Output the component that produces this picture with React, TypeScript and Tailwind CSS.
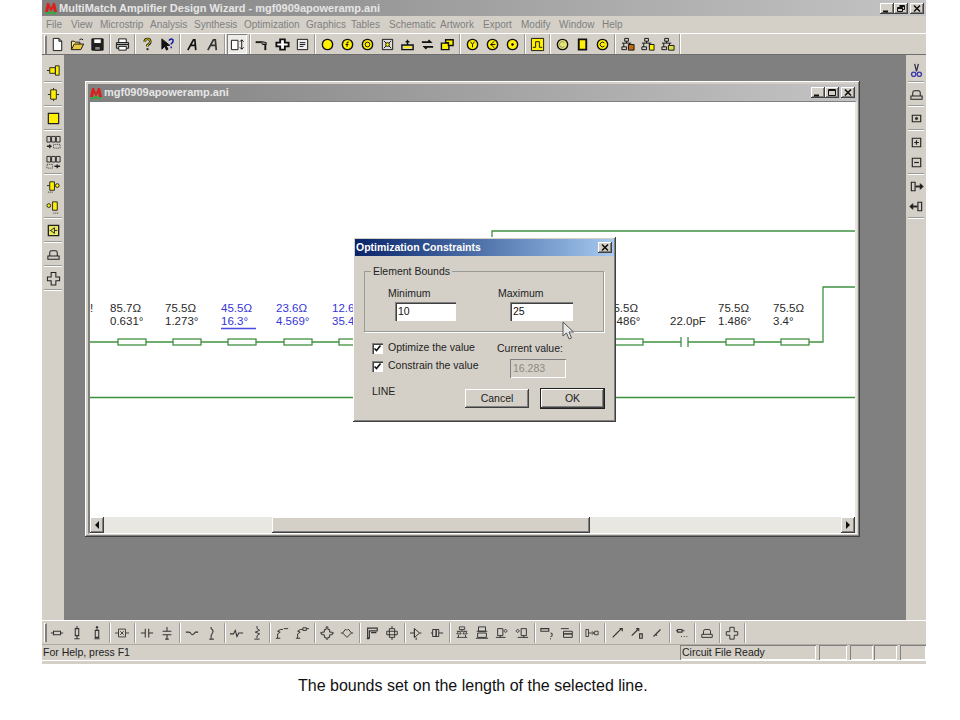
import type { ReactNode } from "react";

const raised = "shadow-[inset_-1px_-1px_0_#404040,inset_1px_1px_0_#ffffff,inset_-2px_-2px_0_#808080]";
const sunken = "shadow-[inset_1px_1px_0_#808080,inset_2px_2px_0_#404040,inset_-1px_-1px_0_#ffffff]";
const thin = "shadow-[inset_1px_1px_0_#808080,inset_-1px_-1px_0_#ffffff]";

function Ico({ children, size = 16, color = "#111" }: { children: ReactNode; size?: number; color?: string }) {
  return (
    <svg width={size} height={size} viewBox="0 0 16 16" fill="none" stroke={color} strokeWidth="1">
      {children}
    </svg>
  );
}

const Y = ({ children }: { children?: ReactNode }) => (
  <>
    <circle cx="8" cy="8" r="5.5" fill="#ffef00" strokeWidth="1.5" />
    {children}
  </>
);

const Logo = ({ size }: { size: number }) => (
  <svg width={size} height={size} viewBox="0 0 14 14" className="shrink-0">
    <path d="M1 11 3 2h2l2 5 2-5h2l2 9h-3L9 7l-2 4-2-4-1 4z" fill="#d8201c" />
    <path d="M2 12.5q5-2 10 0" stroke="#2fae3c" strokeWidth="2" fill="none" />
  </svg>
);

const topGroups: ReactNode[][] = [
  [
    <path d="M3.5 1.5h6l3 3v10h-9zM9.5 1.5v3h3" fill="#fff" />,
    <><path d="M1.5 13.5v-9h3l1 1h5v2" fill="#ffe680" /><path d="M1.5 13.5l3-6h10l-3 6z" fill="#e8c840" /><path d="M10 3q2-2 4 0" /></>,
    <><path d="M2 2h12v12H2z" fill="#222" /><path d="M4 2h8v5H4z" fill="#fff" /><path d="M5 10h6v4H5z" fill="#888" /></>,
  ],
  [<><path d="M4 2h8v4H4z" fill="#fff" /><path d="M1.5 6h13v6h-13z" fill="#bbb" /><path d="M4 10h8v4H4z" fill="#fff" /><path d="M2 8h12" /></>],
  [
    <><path d="M5 5q0-3 3-3t3 3q0 2-3 3.5V10" stroke="#111" strokeWidth="2.6" /><path d="M5 5q0-3 3-3t3 3q0 2-3 3.5V10" stroke="#ffef00" /><path d="M8 12v2" strokeWidth="2" /></>,
    <><path d="M2 2v11l3-3 2 4 1.5-1-2-4h4z" fill="#111" /><path d="M10 4q0-2 2-2t2 2-2 3v1M12 10v2" stroke="#1018a8" strokeWidth="1.6" /></>,
  ],
  [
    <path d="M3 14 9 3h1.500l1 11M6 9h6" strokeWidth="1.8" />,
    <path d="M3 14 9 3h2l1 11M6 9h6" strokeWidth="1.8" stroke="#333" />,
  ],
  [<><path d="M1.5 3.5h7v10h-7z" fill="#fff" /><path d="M12.5 3v10M10.5 5l2-2 2 2M10.5 11l2 2 2-2" /></>],
  [
    <><path d="M1 5h7l4 1v2H8L7 6H1z" fill="#888" /><path d="M11 8v6" strokeWidth="2" /></>,
    <path d="M5.5 2.5h5v3.5h4v4h-4v3.5h-5V10h-4V6h4z" fill="#fff" strokeWidth="2" />,
    <><path d="M2.5 2.5h11v11h-11z" fill="#eee" /><path d="M5 6h6M5 8h6M5 10h4" /></>,
  ],
  [
    <Y />,
    <Y><path d="M9.5 5.5q-2-1-2 1v4M6 8h3" /></Y>,
    <Y><circle cx="8" cy="8" r="2.5" /></Y>,
    <><path d="M2.5 2.5h11v11h-11z" fill="#ddd" /><path d="M4 4l8 8M12 4l-8 8" /><circle cx="8" cy="8" r="2" fill="#ffef00" /></>,
    <><path d="M2 8.5h12v5H2zM8 8V3M6 5h4" strokeWidth="1.5" /><path d="M4 10h8v2H4z" fill="#ffef00" stroke="none" /></>,
    <path d="M2 5.5h9l-2-2M14 10.5H5l2 2" strokeWidth="2" />,
    <><path d="M1.5 6.5h8v7h-8z" fill="#ffef00" strokeWidth="1.5" /><path d="M6 3h8v6H9V6H6z" fill="#ffef00" strokeWidth="1.5" /></>,
  ],
  [
    <Y><path d="M6 5l2 3 2-3M8 8v3" /></Y>,
    <Y><path d="M10 4.5 6 8l4 3.5M6 8h5" /></Y>,
    <Y><circle cx="8" cy="8" r="1" fill="#111" /></Y>,
  ],
  [<><path d="M1.5 1.5h13v13h-13z" fill="#ffef00" /><path d="M3 11h3V5h4v6h3" /></>],
  [
    <><circle cx="8" cy="8" r="5.5" fill="#e8e870" strokeWidth="1.5" /><path d="M10 6a3 3 0 1 0 0 4" stroke="#888" /></>,
    <path d="M4 2.5h8v11H4z" fill="#ffef00" strokeWidth="2" />,
    <><circle cx="8" cy="8" r="5.500" fill="#ffef00" strokeWidth="1.5" /><path d="M10 6.5a2.5 2.5 0 1 0 0 3" /></>,
  ],
  [
    <><path d="M5 1.5h4v3H5zM2 6.5h10M4 6.5v4M10 6.5v4M7 4.5v2M2 10.5h5v3H2z" /><path d="M9 8h6v6H9z" fill="#c06a10" /></>,
    <><path d="M5 1.5h4v3H5zM2 6.5h10M4 6.5v4M10 6.5v4M7 4.5v2M2 10.5h5v3H2z" /><path d="M10 8h5v6h-5z" fill="#ffef00" /></>,
    <><path d="M5 1.5h4v3H5zM2 6.5h10M4 6.5v4M10 6.5v4M7 4.5v2M2 10.5h5v3H2z" /><path d="M9 9h6v5H9z" fill="#e0e040" /></>,
  ],
];

const bottomGroups: ReactNode[][] = [
  [
    <path d="M1 8h3M12 8h3M4 6h8v4H4z" strokeWidth="1.2" />,
    <path d="M8 0v3M8 11v3M6 3h4v8H6zM5 14.5h6" strokeWidth="1.2" />,
    <><path d="M8 3v2M6 5h4v8H6zM5 14.5h6" strokeWidth="1.2" /><circle cx="8" cy="1.5" r="1" fill="#111" /></>,
  ],
  [<path d="M0 8h4M12 8h4M4 3.5h8v9H4zM6 6l4 4M10 6l-4 4" />],
  [
    <path d="M1 8h5M6 3v10M10 3v10M10 8h5" strokeWidth="1.2" />,
    <path d="M8 1v5M3 6h10M3 10h10M8 10v5M6 15h4" strokeWidth="1.2" />,
  ],
  [
    <path d="M1 7h3q2 0 3 2t3 0 2-2h3" strokeWidth="1.2" />,
    <path d="M7 1v2q3 2 2 4T7 11v3M5 15h5" strokeWidth="1.2" />,
  ],
  [
    <path d="M0 9h4l2-4 2 7 2-4h5" strokeWidth="1.2" />,
    <path d="M8 0v3l3 2-5 2 5 2-3 2v3M5 15h6" strokeWidth="1.1" />,
  ],
  [
    <path d="M1 14h5M3 14V9l3-2-3-1 3-2h3M10 3h5" strokeWidth="1.1" />,
    <path d="M1 14h5M3 14V9l3-2-3-1 3-2h3M9 2h4v3H9zM13 3h3" strokeWidth="1.1" />,
  ],
  [
    <path d="M5 4h2V1h2v3h2v3h3v3h-3v3H9v2H7v-2H5v-3H2V7h3zM0 8h2M14 8h2" strokeWidth="1.1" />,
    <path d="M1 8h2l3-4h1l1 1 1-1h1l3 4h2M3 8l5 5 5-5" strokeWidth="1.1" />,
  ],
  [
    <path d="M3 2.5h11v3H5v8H3zM7 7.5h6M2 14.5h3" strokeWidth="1.3" />,
    <path d="M5 3h6v10H5zM2 6h12v4H2zM8 0v3M8 13v3" strokeWidth="1.1" />,
  ],
  [
    <path d="M0 8h5M5 3l6 5-6 5zM11 8h2M5 3v10M7 13v3" strokeWidth="1.1" />,
    <path d="M1 8h2M3 4h4v8H3zM7 4h3v8H7zM10 8h5" strokeWidth="1.1" />,
  ],
  [
    <path d="M5 1h6v3H5zM8 4v2M2 6h12M4 6l-2 3h5L5 6M11 6l-2 3h5l-2-3M2 13h12M4 10v3M12 10v3" strokeWidth="1" />,
    <path d="M4 1h8v5H4zM2 6h12M3 8h10v5H3zM1 14h14" strokeWidth="1.1" />,
    <path d="M3 3h6v8H3zM1 13h11M6 11v2M12 4a1.6 1.6 0 1 0 .1 0" strokeWidth="1.1" />,
    <path d="M7 3h6v8H7zM3 13h12M10 11v2M3 4a1.6 1.6 0 1 0 .1 0" strokeWidth="1.1" />,
  ],
  [
    <path d="M1 3h9v3H1zM12 8q2 0 2 2t-2 2M12 14v1" strokeWidth="1.2" />,
    <path d="M1 3h9M4 6h10v3H4zM4 9h10v4H4z" strokeWidth="1.1" />,
  ],
  [<path d="M1 4h3v8H1zM4 8h6l-2-2M10 8l-2 2M11 6h4v4h-4z" strokeWidth="1" />],
  [
    <path d="M3 13l10-10M6 10l3-3M11 3h3v3" strokeWidth="1.4" />,
    <path d="M2 11l7-7M7 3h3v3M11 9h3v5h-3z" strokeWidth="1.3" />,
    <path d="M4 12l8-8M6 9l2 2" strokeWidth="1.3" />,
  ],
  [<><path d="M3 4h5v3H3zM1 5.5h2M8 5.5h3M10 12h1M13 12h1M7 12h1" strokeWidth="1.2" /></>],
  [<path d="M2 9.5h12v3.5H2zM4 9.5V6q0-2 2-2h4q2 0 2 2v3.500" strokeWidth="1.1" />],
  [<path d="M5.5 1.500h5v5h4v4h-4v4.500h-5v-4.500h-4v-4h4z" strokeWidth="1.1" />],
];

const leftGroups: ReactNode[][] = [
  [<><path d="M1 8h3M4 5h6v6H4zM10 3h4v10h-4z" fill="#ffef00" /></>],
  [<><path d="M8 1v2M8 13v2M2 8h3M11 8h3" /><path d="M5 3h6v10H5z" fill="#ffef00" /></>],
  [<path d="M2.500 2.500h11v11h-11z" fill="#ffef00" strokeWidth="1.3" />],
  [
    <><path d="M1 1.500h4v6H1zM6 1.500h4v6H6zM11 1.500h4v6h-4zM5 4.500h1M10 4.500h1" /><path d="M1 12h5M4 10v4" strokeWidth="1.5" /><path d="M8 10h7v4H8z" stroke="#333" strokeDasharray="1 1" /></>,
    <><path d="M1 1.500h4v6H1zM6 1.500h4v6H6zM11 1.500h4v6h-4zM5 4.500h1M10 4.500h1" /><path d="M9 12h6M12 10v4" strokeWidth="1.5" /><path d="M1 10h6v4H1z" stroke="#333" strokeDasharray="1 1" /></>,
  ],
  [
    <><path d="M1 7h3M4 3h5v9H4z" fill="#ffef00" /><circle cx="12" cy="7" r="2" fill="#ffef00" /><path d="M2 14h5" strokeDasharray="1 1" /></>,
    <><path d="M7 3h5v9H7z" fill="#ffef00" /><circle cx="3" cy="7" r="2" fill="#ffef00" /><path d="M8 15h6" strokeDasharray="1 1" /></>,
  ],
  [<><path d="M2.500 2.500h11v11h-11z" fill="#e8e860" strokeWidth="1.4" /><path d="M5 8l4-3v6zM9 8h3M5 8H4" /></>],
  [<path d="M2 9.500h12v3.500H2zM4 9.500V6q0-2 2-2h4q2 0 2 2v3.500" strokeWidth="1.1" />],
  [<path d="M5.500 1.500h5v5h4v4h-4v4.500h-5v-4.500h-4v-4h4z" strokeWidth="1.1" />],
];

const rightGroups: ReactNode[][] = [
  [<><path d="M6 1l2 8M10 1 8 9" stroke="#334" strokeWidth="1.4" /><circle cx="5" cy="12" r="2.300" stroke="#3a3aa8" strokeWidth="1.4" /><circle cx="11" cy="12" r="2.300" stroke="#3a3aa8" strokeWidth="1.4" /></>],
  [<path d="M2 9.500h12v3.500H2zM4 9.500V6q0-2 2-2h4q2 0 2 2v3.500" strokeWidth="1.1" />],
  [<><path d="M3.500 4.500h9v7h-9z" strokeWidth="1.2" /><circle cx="8" cy="8" r="1.200" fill="#333" /></>],
  [
    <><path d="M3.500 3.500h9v9h-9z" strokeWidth="1.2" /><path d="M5.500 8h5M8 5.500v5" strokeWidth="1.3" /></>,
    <><path d="M3.500 3.500h9v9h-9z" strokeWidth="1.2" /><path d="M5.500 8h5" strokeWidth="1.3" /></>,
  ],
  [
    <><path d="M2.500 3.500h4v9h-4z" strokeWidth="1.2" /><path d="M7 8h6" strokeWidth="2" /><path d="M12 5l3 3-3 3z" fill="#111" /></>,
    <><path d="M9.500 3.500h4v9h-4z" strokeWidth="1.2" /><path d="M3 8h6" strokeWidth="2" /><path d="M4 5 1 8l3 3z" fill="#111" /></>,
  ],
];

function Gripper() {
  return <div className="w-[3px] h-[19px] ml-[2px] border-l border-t border-white border-r-2 border-r-[#808080]" />;
}

function HToolbar({ groups, pressed, size, color }: { groups: ReactNode[][]; pressed?: number; size?: number; color?: string }) {
  return (
    <>
      {groups.map((g, i) => (
        <div key={i} className="flex items-center">
          {g.map((icon, j) => (
            <div
              key={j}
              className={`w-[20px] h-[20px] flex items-center justify-center ${pressed === i ? thin + " bg-[#eeece6]" : ""}`}
            >
              <Ico size={size} color={color}>{icon}</Ico>
            </div>
          ))}
          <div className="w-[5px] h-[20px] flex justify-center">
            <div className="w-[2px] h-full border-l border-[#9a9a9a] border-r border-r-white" />
          </div>
        </div>
      ))}
    </>
  );
}

function VToolbar({ groups, side }: { groups: ReactNode[][]; side: string }) {
  return (
    <div className={`bg-[#d4d0c8] pt-[5px] flex flex-col items-center shrink-0 ${side}`}>
      {groups.map((g, i) => (
        <div key={i} className="flex flex-col items-center w-full">
          {g.map((icon, j) => (
            <div key={j} className="h-[20px] flex items-center justify-center">
              <Ico size={15} color="#222">{icon}</Ico>
            </div>
          ))}
          <div className="h-[4px] w-full flex items-center px-[2px]">
            <div className="h-[2px] w-full border-t border-[#9a9a9a] border-b border-b-white" />
          </div>
        </div>
      ))}
    </div>
  );
}

function WinBtn({ kind, className = "" }: { kind: "min" | "max" | "restore" | "close"; className?: string }) {
  return (
    <div className={`w-[14px] h-[11px] bg-[#d4d0c8] flex items-center justify-center ${raised} ${className}`}>
      <svg width="10" height="9" viewBox="0 0 10 9" fill="none" stroke="#111">
        {kind === "min" && <path d="M1 7.500h5" strokeWidth="2" />}
        {kind === "max" && <path d="M1.500 1.500h7v6h-7zM1.500 2.500h7" />}
        {kind === "restore" && <path d="M3.500 1.500h5v4h-2M1.500 3.500h5v4h-5zM3.500 2.500h5M1.500 4.500h5" />}
        {kind === "close" && <path d="M2 1.500l6 6M8 1.500l-6 6" strokeWidth="1.600" />}
      </svg>
    </div>
  );
}

const menus = [
  ["File", "w-[25px]"],
  ["View", "w-[29px]"],
  ["Microstrip", "w-[50px]"],
  ["Analysis", "w-[44px]"],
  ["Synthesis", "w-[50px]"],
  ["Optimization", "w-[62px]"],
  ["Graphics", "w-[45px]"],
  ["Tables", "w-[38px]"],
  ["Schematic", "w-[51px]"],
  ["Artwork", "w-[43px]"],
  ["Export", "w-[38px]"],
  ["Modify", "w-[38px]"],
  ["Window", "w-[43px]"],
  ["Help", "w-[30px]"],
];

const labels = [
  { pos: "left-[0px]", a: "!", b: "" },
  { pos: "left-[20px]", a: "85.7Ω", b: "0.631°" },
  { pos: "left-[75px]", a: "75.5Ω", b: "1.273°" },
  { pos: "left-[131px]", a: "45.5Ω", b: "16.3°", blue: true },
  { pos: "left-[186px]", a: "23.6Ω", b: "4.569°", blue: true },
  { pos: "left-[242px]", a: "12.6Ω", b: "35.4°", blue: true },
  { pos: "left-[517px]", a: "75.5Ω", b: "1.486°" },
  { pos: "left-[580px]", a: "\u00a0", b: "22.0pF" },
  { pos: "left-[628px]", a: "75.5Ω", b: "1.486°" },
  { pos: "left-[683px]", a: "75.5Ω", b: "3.4°" },
];

function Circuit() {
  const rects = [118, 173, 228, 284, 339, 615, 726, 781];
  return (
    <svg className="absolute inset-0" width="765" height="416" viewBox="90 102 765 416" fill="none" stroke="#3f9142" strokeWidth="1.300">
      <path d="M90 342H400M600 342H681M688 342H823V287H855M492 240V231H855M90 397.500H855" />
      <path d="M681 337V347M688 337V347" />
      {rects.map((x) => (
        <rect key={x} x={x} y="339" width="28" height="6" fill="#fff" />
      ))}
      <path d="M221 328.500H256" stroke="#4a4ae0" strokeWidth="1.300" />
    </svg>
  );
}

function ChildWindow() {
  return (
    <div className={`absolute left-[21px] top-[26px] w-[775px] h-[456px] bg-[#d4d0c8] p-[3px] flex flex-col ${raised}`}>
      <div className="h-[17px] shrink-0 flex items-center pl-[1px] pr-[1px] bg-gradient-to-r from-[#808080] to-[#c4c4c4]">
        <Logo size={14} />
        <span className="ml-[1px] text-[11px] font-bold text-[#e6e6e6] font-['Liberation_Sans',sans-serif]">mgf0909apoweramp.ani</span>
        <div className="ml-auto flex mr-[1px]">
          <WinBtn kind="min" />
          <WinBtn kind="max" />
          <WinBtn kind="close" className="ml-[2px]" />
        </div>
      </div>
      <div className="flex-1 flex flex-col border-l-2 border-r-2 border-t border-b border-l-[#808080] border-t-[#808080] border-r-[#e8e6e1] border-b-white min-h-0">
        <div className="relative flex-1 bg-white overflow-hidden">
          <Circuit />
          {labels.map((l) => (
            <div
              key={l.pos}
              className={`absolute top-[200px] text-[11.500px] leading-[13px] whitespace-nowrap font-['Liberation_Sans',sans-serif] ${l.pos} ${l.blue ? "text-[#3434d8]" : "text-[#2a2a2a]"}`}
            >
              <div>{l.a}</div>
              <div>{l.b}</div>
            </div>
          ))}
        </div>
        <div className="h-[16px] shrink-0 flex bg-[#e9e7e2]">
          <ScrollBtn dir="left" />
          <div className="w-[168px]" />
          <div className={`w-[318px] bg-[#d4d0c8] ${raised}`} />
          <div className="flex-1" />
          <ScrollBtn dir="right" />
        </div>
      </div>
    </div>
  );
}

function ScrollBtn({ dir }: { dir: "left" | "right" }) {
  return (
    <div className={`w-[14px] h-full bg-[#d4d0c8] flex items-center justify-center ${raised}`}>
      <svg width="6" height="8" viewBox="0 0 6 8">
        <path d={dir === "left" ? "M5 0v8L1 4z" : "M1 0v8l4-4z"} fill="#111" />
      </svg>
    </div>
  );
}

function Check() {
  return (
    <div className={`w-[11px] h-[11px] bg-white flex items-center justify-center ${sunken}`}>
      <svg width="9" height="9" viewBox="0 0 9 9" fill="none" stroke="#111" strokeWidth="1.600">
        <path d="M1.500 4.500l2 2 4-5" />
      </svg>
    </div>
  );
}

function Dialog() {
  return (
    <div className={`absolute left-[289px] top-[182px] w-[263px] h-[185px] bg-[#d4d0c8] p-[2px] text-[10.500px] text-[#222] font-['Liberation_Sans',sans-serif] ${raised}`}>
      <div className="h-[17px] flex items-center pl-[1px] pr-[2px] bg-gradient-to-r from-[#0a246a] to-[#a6caf0]">
        <span className="text-[10.500px] font-bold text-white">Optimization Constraints</span>
        <WinBtn kind="close" className="ml-auto" />
      </div>
      <div className="relative mt-[15px] ml-[9px] w-[240px] h-[61px] border border-[#9a9a94] shadow-[1px_1px_0_#fff] pt-[15px] flex">
        <span className="absolute left-[6px] top-[-7px] px-[2px] leading-[13px] bg-[#d4d0c8]">Element Bounds</span>
        <div className="w-[133px] pl-[23px]">
          <div className="leading-[13px]">Minimum</div>
          <div className={`ml-[7px] mt-[2px] w-[61px] h-[19px] bg-white pl-[3px] leading-[19px] text-[#111] ${sunken}`}>10</div>
        </div>
        <div>
          <div className="leading-[13px]">Maximum</div>
          <div className={`ml-[12px] mt-[2px] w-[63px] h-[19px] bg-white pl-[3px] leading-[19px] text-[#111] ${sunken}`}>25</div>
        </div>
      </div>
      <div className="mt-[7px] pl-[17px] flex">
        <div className="w-[125px]">
          <div className="h-[18px] flex items-center gap-[5px]"><Check />Optimize the value</div>
          <div className="h-[18px] flex items-center gap-[5px]"><Check />Constrain the value</div>
        </div>
        <div>
          <div className="h-[18px] leading-[18px]">Current value:</div>
          <div className={`ml-[13px] mt-[2px] w-[56px] h-[19px] pl-[3px] leading-[19px] text-[#8a8a86] ${thin}`}>16.283</div>
        </div>
      </div>
      <div className="mt-[10px] pl-[17px] flex items-start">
        <div className="w-[93px] -mt-[4px] leading-[14px]">LINE</div>
        <button className={`mt-[1px] w-[64px] h-[19px] bg-[#d4d0c8] text-center ${raised}`}>Cancel</button>
        <div className="ml-[11px] w-[65px] h-[21px] border border-[#222]">
          <button className={`w-full h-full bg-[#d4d0c8] text-center ${raised}`}>OK</button>
        </div>
      </div>
    </div>
  );
}

export default function App() {
  return (
    <div className="w-[960px] h-[720px] bg-white overflow-hidden font-['Liberation_Sans',sans-serif]">
      <div className="ml-[42px] w-[884px] h-[664px] bg-[#d4d0c8] flex flex-col">
        <div className="h-[16px] shrink-0 flex items-center bg-gradient-to-r from-[#808080] to-[#c4c4c4] pl-[2px] pr-[2px]">
          <Logo size={14} />
          <span className="ml-[1px] text-[11px] font-bold text-[#e6e6e6]">MultiMatch Amplifier Design Wizard - mgf0909apoweramp.ani</span>
          <div className="ml-auto flex">
            <WinBtn kind="min" />
            <WinBtn kind="restore" />
            <WinBtn kind="close" className="ml-[2px]" />
          </div>
        </div>
        <div className="h-[17px] shrink-0 flex items-center pl-[4px] text-[10px] text-[#808080]">
          {menus.map(([name, w]) => (
            <span key={name} className={w}>{name}</span>
          ))}
        </div>
        <div className="h-[21px] shrink-0 flex items-center border-t border-white">
          <Gripper />
          <HToolbar groups={topGroups} pressed={4} size={15} />
        </div>
        <div className="flex-1 flex min-h-0 border-t border-[#6e6e6e]">
          <VToolbar groups={leftGroups} side="w-[22px]" />
          <div className="relative flex-1 bg-[#808080]">
            <ChildWindow />
            <Dialog />
            <svg className="absolute left-[498px] top-[266px]" width="12" height="19" viewBox="0 0 12 19">
              <path d="M1 1v14l3.500-3 2.500 6 2.500-1-2.500-6h4.500z" fill="#e8e8e8" stroke="#555" />
            </svg>
          </div>
          <VToolbar groups={rightGroups} side="w-[20px]" />
        </div>
        <div className="h-[24px] shrink-0 flex items-center border-t border-white">
          <Gripper />
          <HToolbar groups={bottomGroups} size={14} color="#333" />
        </div>
        <div className="h-[16px] shrink-0 flex items-center text-[10.500px] text-[#222] border-t border-[#b0aca4]">
          <span className="flex-1 pl-[1px]">For Help, press F1</span>
          <span className={`w-[136px] h-[15px] pl-[2px] leading-[15px] ${thin}`}>Circuit File Ready</span>
          <span className={`ml-[3px] w-[28px] h-[15px] ${thin}`} />
          <span className={`ml-[3px] w-[23px] h-[15px] ${thin}`} />
          <span className={`ml-[1px] w-[23px] h-[15px] ${thin}`} />
          <span className={`ml-[3px] w-[26px] h-[15px] ${thin}`} />
        </div>
        <div className="h-[4px] shrink-0 border-t border-white" />
      </div>
      <p className="mt-[13px] pl-[298px] text-[16px] leading-[17px] text-[#111] font-['Liberation_Sans',sans-serif]">
        The bounds set on the length of the selected line.
      </p>
    </div>
  );
}
